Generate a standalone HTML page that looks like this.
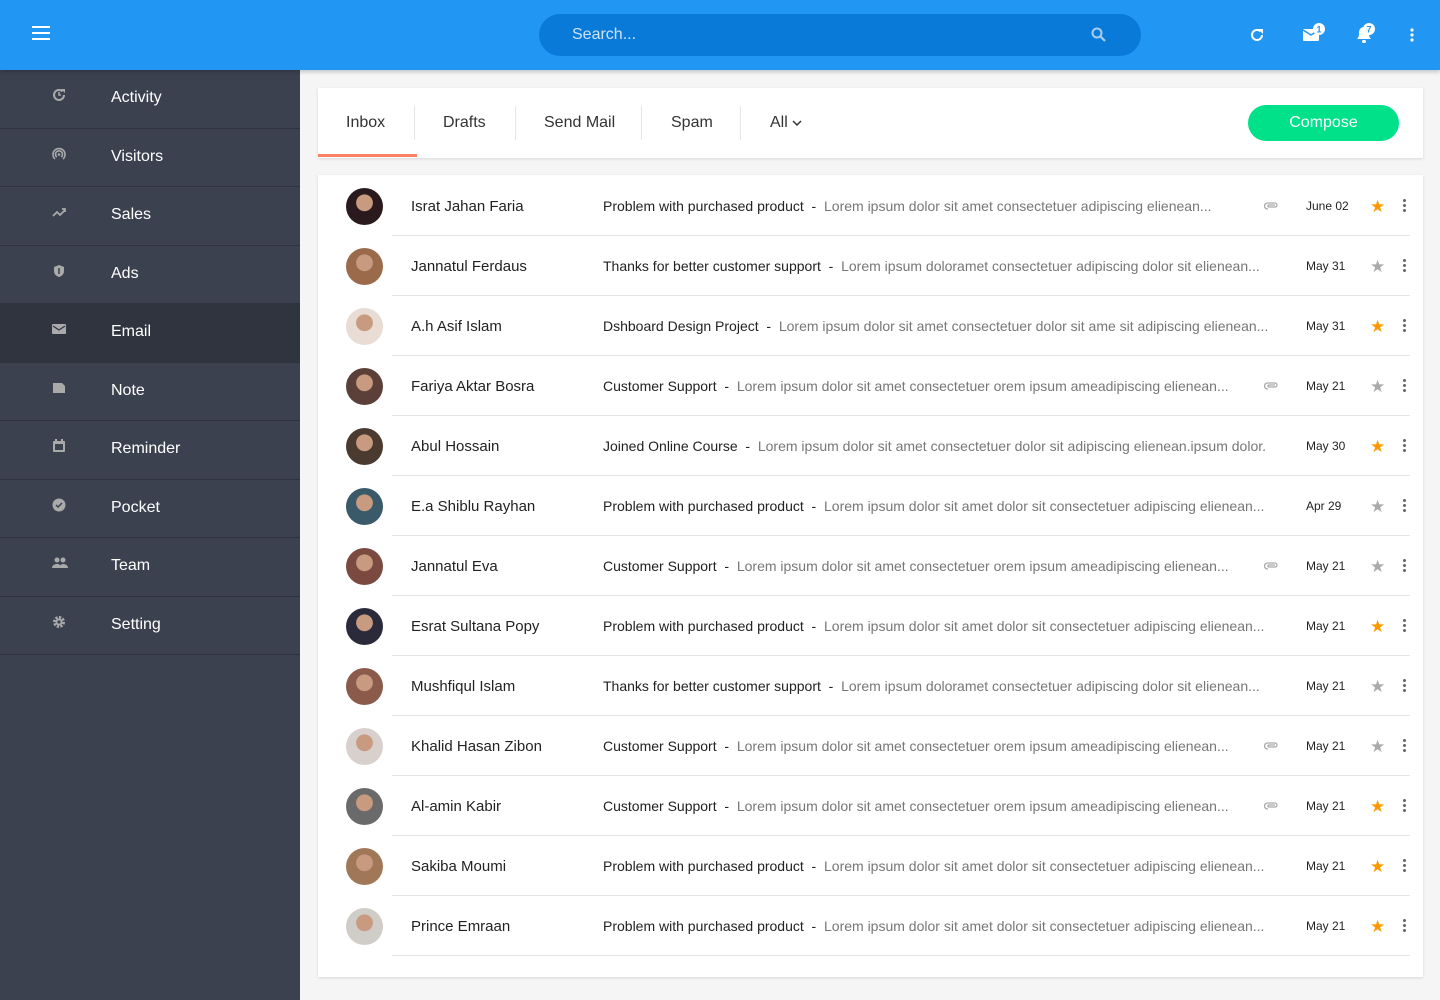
<!DOCTYPE html>
<html><head><meta charset="utf-8">
<style>
*{box-sizing:border-box;margin:0;padding:0}
body{width:1440px;height:1000px;overflow:hidden;background:#f5f5f5;font-family:"Liberation Sans",sans-serif;position:relative}
.top{position:absolute;left:0;top:0;width:1440px;height:70px;background:#2196f3;box-shadow:0 2px 4px rgba(0,0,0,.2);z-index:2}
.search{position:absolute;left:539px;top:14px;width:602px;height:42px;border-radius:21px;background:#0a7ad9;color:#cfe3f7;font-size:16px;line-height:42px;padding-left:33px}
.side{position:absolute;left:0;top:70px;width:300px;height:930px;background:#3c4150}
.it{height:58.5px;border-bottom:1px solid #2f333e;position:relative;color:#fff;font-size:16px}
.it span{position:absolute;left:111px;top:19px}
.it svg{position:absolute;left:52px;top:18px}
.it.act{background:#30343e}
.tabs{position:absolute;left:318px;top:88px;width:1105px;height:70px;background:#fff;box-shadow:0 1px 3px rgba(0,0,0,.12)}
.tab{position:absolute;top:26px;font-size:16px;color:#333}
.sep{position:absolute;top:18px;width:1px;height:34px;background:#e6e6e6}
.compose{position:absolute;left:930px;top:17px;width:151px;height:36px;border-radius:18px;background:#00e18a;color:#fff;font-size:16px;text-align:center;line-height:36px}
.list{position:absolute;left:318px;top:175px;width:1105px;height:802px;background:#fff;box-shadow:0 1px 3px rgba(0,0,0,.12)}
.row{position:absolute;left:0;width:1105px;height:60px}
.row .line{position:absolute;left:74px;right:13px;bottom:0;height:1px;background:#e4e4e4}
.av{position:absolute;left:28px;top:12px;width:37px;height:37px;border-radius:50%}
.nm{position:absolute;left:93px;top:22px;font-size:15px;color:#222}
.sb{position:absolute;left:285px;top:22px;font-size:14px;color:#222;white-space:nowrap}
.sb i{font-style:normal;color:#777}
.clip{position:absolute;left:946px;top:26px}
.dt{position:absolute;left:988px;top:23px;font-size:12px;color:#222}
.st{position:absolute;left:1052px;top:21px;font-size:17px}
.dots{position:absolute;left:1085px;top:23px;width:3px}
.dots b{display:block;width:3px;height:3px;border-radius:50%;background:#666;margin-bottom:2px}
</style></head><body>
<div class="top">
<svg style="position:absolute;left:32px;top:26px" width="18" height="14"><rect y="0" width="18" height="2" fill="#fff"/><rect y="6" width="18" height="2" fill="#fff"/><rect y="12" width="18" height="2" fill="#fff"/></svg>
<div class="search">Search...<svg style="position:absolute;left:552px;top:13px" width="16" height="16" viewBox="0 0 16 16"><circle cx="6" cy="6" r="4.5" stroke="#a9cdf0" stroke-width="2" fill="none"/><path d="M9.5 9.5L14 14" stroke="#a9cdf0" stroke-width="2.2"/></svg></div>
<svg style="position:absolute;left:1249px;top:27px" width="16" height="16" viewBox="0 0 16 16"><path d="M13 8a5 5 0 1 1-1.5-3.6" stroke="#fff" stroke-width="2" fill="none"/><path d="M9 2h5v5z" fill="#fff"/></svg>
<svg style="position:absolute;left:1302px;top:22px" width="28" height="22" viewBox="0 0 28 22"><rect x="1" y="7" width="16" height="12" rx="1" fill="#fff"/><path d="M1 8l8 5 8-5" stroke="#2196f3" stroke-width="1.5" fill="none"/><circle cx="17" cy="7" r="6" fill="#fff"/><text x="17" y="10.5" font-size="9" font-weight="bold" text-anchor="middle" fill="#2196f3" font-family="Liberation Sans">1</text></svg>
<svg style="position:absolute;left:1353px;top:21px" width="26" height="24" viewBox="0 0 26 24"><path d="M4 18c2-2 2-4 2-7a5 5 0 0 1 10 0c0 3 0 5 2 7z" fill="#fff"/><rect x="9" y="19" width="4" height="3" rx="1.5" fill="#fff"/><circle cx="16" cy="8" r="6" fill="#fff"/><text x="16" y="11.5" font-size="9" font-weight="bold" text-anchor="middle" fill="#2196f3" font-family="Liberation Sans">7</text></svg>
<svg style="position:absolute;left:1410px;top:28px" width="4" height="14"><circle cx="2" cy="2" r="1.6" fill="#fff"/><circle cx="2" cy="7" r="1.6" fill="#fff"/><circle cx="2" cy="12" r="1.6" fill="#fff"/></svg>
</div>
<div class="side">
<div class="it"><svg width="14" height="14" viewBox="0 0 14 14"><path d="M12 7a5 5 0 1 1-1.5-3.6" stroke="#aaa" stroke-width="2" fill="none"/><path d="M9 1h4v4z" fill="#aaa"/><path d="M7 4v3h2" stroke="#aaa" stroke-width="1.5" fill="none"/></svg><span>Activity</span></div>
<div class="it"><svg width="14" height="14" viewBox="0 0 14 14"><path d="M3 12a6 6 0 1 1 8 0M4.8 10a3.5 3.5 0 1 1 4.4 0" stroke="#aaa" stroke-width="1.6" fill="none"/><circle cx="7" cy="7.5" r="1.3" fill="#aaa"/></svg><span>Visitors</span></div>
<div class="it"><svg width="14" height="14" viewBox="0 0 14 14"><path d="M1 11l4-4 3 3 5-5M10 4h3v3" stroke="#aaa" stroke-width="1.7" fill="none"/></svg><span>Sales</span></div>
<div class="it"><svg width="14" height="14" viewBox="0 0 14 14"><path d="M7 1l5 2v4c0 3-2 5-5 6-3-1-5-3-5-6V3z" fill="#aaa"/><path d="M7 4v6" stroke="#3c4150" stroke-width="1.5"/></svg><span>Ads</span></div>
<div class="it act"><svg width="14" height="14" viewBox="0 0 14 14"><rect x="0" y="2" width="14" height="10" rx="1" fill="#aaa"/><path d="M1 4l6 4 6-4" stroke="#30343e" stroke-width="1.2" fill="none"/></svg><span>Email</span></div>
<div class="it"><svg width="14" height="14" viewBox="0 0 14 14"><path d="M1 2h9l3 3v7H1z" fill="#aaa"/></svg><span>Note</span></div>
<div class="it"><svg width="14" height="14" viewBox="0 0 14 14"><rect x="1" y="2" width="12" height="11" rx="1" fill="#aaa"/><rect x="3" y="5" width="8" height="6" fill="#3c4150"/><rect x="3" y="0" width="2" height="3" fill="#aaa"/><rect x="9" y="0" width="2" height="3" fill="#aaa"/></svg><span>Reminder</span></div>
<div class="it"><svg width="14" height="14" viewBox="0 0 14 14"><circle cx="7" cy="7" r="6.5" fill="#aaa"/><path d="M4 7l2 2 4-4" stroke="#3c4150" stroke-width="1.5" fill="none"/></svg><span>Pocket</span></div>
<div class="it"><svg width="16" height="14" viewBox="0 0 16 14"><circle cx="5" cy="4" r="2.5" fill="#aaa"/><circle cx="11" cy="4" r="2.5" fill="#aaa"/><path d="M0 12c0-3 3-4 5-4s5 1 5 4zM8 12c0-2 1-4 3-4 2 0 5 1 5 4z" fill="#aaa"/></svg><span>Team</span></div>
<div class="it"><svg width="14" height="14" viewBox="0 0 14 14"><circle cx="7" cy="7" r="4.5" fill="none" stroke="#aaa" stroke-width="3" stroke-dasharray="2.2 1.3"/><circle cx="7" cy="7" r="3.5" fill="#aaa"/><circle cx="7" cy="7" r="1.6" fill="#3c4150"/></svg><span>Setting</span></div>
</div>
<div class="tabs">
<div class="tab" style="left:28px">Inbox</div><div class="sep" style="left:96px"></div>
<div class="tab" style="left:125px">Drafts</div><div class="sep" style="left:197px"></div>
<div class="tab" style="left:226px">Send Mail</div><div class="sep" style="left:323px"></div>
<div class="tab" style="left:353px">Spam</div><div class="sep" style="left:422px"></div>
<div class="tab" style="left:452px">All <svg width="10" height="8" viewBox="0 0 10 8"><path d="M1 2l4 4 4-4" stroke="#333" stroke-width="1.5" fill="none"/></svg></div>
<div style="position:absolute;left:0;top:66px;width:99px;height:3px;background:#fa8262"></div>
<div class="compose">Compose</div>
</div>
<div class="list" id="L"></div>
<script>
var d=[["Israt Jahan Faria","Problem with purchased product","Lorem ipsum dolor sit amet consectetuer adipiscing elienean...",1,"June 02",1,"#2a1a1e"],
["Jannatul Ferdaus","Thanks for better customer support","Lorem ipsum doloramet consectetuer adipiscing dolor sit elienean...",0,"May 31",0,"#9a6a4a"],
["A.h Asif Islam","Dshboard Design Project","Lorem ipsum dolor sit amet consectetuer dolor sit ame sit adipiscing elienean...",0,"May 31",1,"#e8dcd4"],
["Fariya Aktar Bosra","Customer Support","Lorem ipsum dolor sit amet consectetuer orem ipsum ameadipiscing elienean...",1,"May 21",0,"#5a4038"],
["Abul Hossain","Joined Online Course","Lorem ipsum dolor sit amet consectetuer dolor sit adipiscing elienean.ipsum dolor.",0,"May 30",1,"#4a3a30"],
["E.a Shiblu Rayhan","Problem with purchased product","Lorem ipsum dolor sit amet dolor sit consectetuer adipiscing elienean...",0,"Apr 29",0,"#3a5a6a"],
["Jannatul Eva","Customer Support","Lorem ipsum dolor sit amet consectetuer orem ipsum ameadipiscing elienean...",1,"May 21",0,"#7a4a40"],
["Esrat Sultana Popy","Problem with purchased product","Lorem ipsum dolor sit amet dolor sit consectetuer adipiscing elienean...",0,"May 21",1,"#2a2a3a"],
["Mushfiqul Islam","Thanks for better customer support","Lorem ipsum doloramet consectetuer adipiscing dolor sit elienean...",0,"May 21",0,"#8a5a4a"],
["Khalid Hasan Zibon","Customer Support","Lorem ipsum dolor sit amet consectetuer orem ipsum ameadipiscing elienean...",1,"May 21",0,"#d8d0cc"],
["Al-amin Kabir","Customer Support","Lorem ipsum dolor sit amet consectetuer orem ipsum ameadipiscing elienean...",1,"May 21",1,"#6a6a6a"],
["Sakiba Moumi","Problem with purchased product","Lorem ipsum dolor sit amet dolor sit consectetuer adipiscing elienean...",0,"May 21",1,"#a07858"],
["Prince Emraan","Problem with purchased product","Lorem ipsum dolor sit amet dolor sit consectetuer adipiscing elienean...",0,"May 21",1,"#d0ccc8"]];
var h="";d.forEach(function(r,i){h+='<div class="row" style="top:'+(1+i*60)+'px"><div class="av" style="background:radial-gradient(circle at 50% 40%,#c89a80 0 28%,'+r[6]+' 30%)"></div><div class="nm">'+r[0]+'</div><div class="sb">'+r[1]+' &nbsp;-&nbsp; <i>'+r[2]+'</i></div>'+(r[3]?'<svg class="clip" width="14" height="8" viewBox="0 0 14 8"><path d="M4 7H3.5a3 3 0 0 1 0-6H11a2 2 0 0 1 0 4H5a1 1 0 0 1 0-2h6" stroke="#aaa" stroke-width="1.3" fill="none"/></svg>':'')+'<div class="dt">'+r[4]+'</div><div class="st" style="color:'+(r[5]?'#ff9800':'#aaa')+'">&#9733;</div><div class="dots"><b></b><b></b><b></b></div><div class="line"></div></div>'});
document.getElementById("L").innerHTML=h;
</script>
</body></html>
